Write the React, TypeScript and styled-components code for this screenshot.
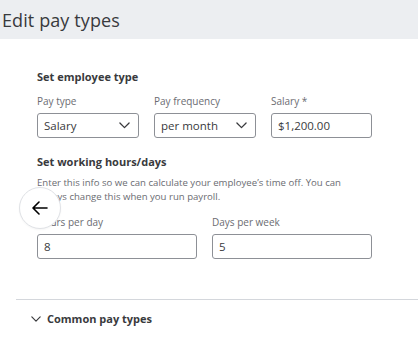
import React from "react";
import styled, { createGlobalStyle } from "styled-components";

const GlobalStyle = createGlobalStyle`
  body {
    margin: 0;
    background: #fff;
    font-family: "Open Sans", "Noto Sans", sans-serif;
    color: #393a3d;
  }
`;

const Page = styled.div`
  position: relative;
  width: 418px;
  height: 346px;
  overflow: hidden;
`;

const Header = styled.div`
  height: 39px;
  background: #eceef1;
  display: flex;
  align-items: center;
  padding-left: 2px;
`;

const Title = styled.h1`
  margin: 0;
  font-size: 18px;
  font-weight: 400;
  color: #393a3d;
  letter-spacing: 0.1px;
`;

const Section = styled.div`
  padding: 30px 46px 0 37px;
`;

const SectionTitle = styled.h2<{ $top?: number }>`
  margin: ${(p) => p.$top ?? 0}px 0 0;
  font-size: 11px;
  line-height: 16px;
  font-weight: 700;
  color: #393a3d;
`;

const Row = styled.div<{ $cols: string; $top: number }>`
  display: grid;
  grid-template-columns: ${(p) => p.$cols};
  column-gap: 15px;
  margin-top: ${(p) => p.$top}px;
`;

const Field = styled.div`
  display: flex;
  flex-direction: column;
`;

const Label = styled.label`
  font-size: 10px;
  line-height: 14px;
  color: #6b6c72;
  margin-bottom: 5px;
`;

const Box = styled.div`
  box-sizing: border-box;
  height: 25px;
  border: 1px solid #8d9096;
  border-radius: 3px;
  display: flex;
  align-items: center;
  justify-content: space-between;
  padding: 0 8px 0 6px;
  font-size: 11.5px;
  color: #393a3d;
`;

const Help = styled.p`
  margin: 6px 0 0;
  font-size: 9.6px;
  line-height: 14px;
  color: #6b6c72;
`;

const Divider = styled.hr`
  border: none;
  border-top: 1px solid #d4d7dc;
  margin: 40px 0 0 16px;
`;

const Accordion = styled.div`
  display: flex;
  align-items: center;
  gap: 6px;
  padding: 11px 0 0 31px;
  font-size: 11px;
  font-weight: 700;
  color: #393a3d;
`;

const BackButton = styled.button`
  position: absolute;
  left: 19px;
  top: 187px;
  width: 42px;
  height: 42px;
  border-radius: 50%;
  border: 1px solid #e0e2e6;
  background: #fff;
  display: flex;
  align-items: center;
  justify-content: center;
  padding: 0;
  box-shadow: 0 1px 2px rgba(0, 0, 0, 0.04);
`;

const Chevron: React.FC<{ size?: number; color?: string }> = ({ size = 11, color = "#393a3d" }) => (
  <svg width={size} height={size * 0.6} viewBox="0 0 12 7" fill="none">
    <path d="M1 1l5 5 5-5" stroke={color} strokeWidth="1.4" strokeLinecap="round" strokeLinejoin="round" />
  </svg>
);

const Select: React.FC<{ value: string }> = ({ value }) => (
  <Box>
    <span>{value}</span>
    <Chevron />
  </Box>
);

const App: React.FC = () => (
  <Page>
    <GlobalStyle />
    <Header>
      <Title>Edit pay types</Title>
    </Header>
    <Section>
      <SectionTitle>Set employee type</SectionTitle>
      <Row $cols="102px 102px 101px" $top={9}>
        <Field>
          <Label>Pay type</Label>
          <Select value="Salary" />
        </Field>
        <Field>
          <Label>Pay frequency</Label>
          <Select value="per month" />
        </Field>
        <Field>
          <Label>Salary *</Label>
          <Box>$1,200.00</Box>
        </Field>
      </Row>
      <SectionTitle $top={16}>Set working hours/days</SectionTitle>
      <Help>
        Enter this info so we can calculate your employee’s time off. You can always change this when you run payroll.
      </Help>
      <Row $cols="160px 160px" $top={11}>
        <Field>
          <Label>Hours per day</Label>
          <Box>8</Box>
        </Field>
        <Field>
          <Label>Days per week</Label>
          <Box>5</Box>
        </Field>
      </Row>
    </Section>
    <Divider />
    <Accordion>
      <Chevron size={10} />
      <span>Common pay types</span>
    </Accordion>
    <BackButton aria-label="Back">
      <svg width="16" height="14" viewBox="0 0 16 14" fill="none">
        <path d="M15 7H1.5M7 1L1 7l6 6" stroke="#000" strokeWidth="1.6" strokeLinecap="round" strokeLinejoin="round" />
      </svg>
    </BackButton>
  </Page>
);

export default App;
